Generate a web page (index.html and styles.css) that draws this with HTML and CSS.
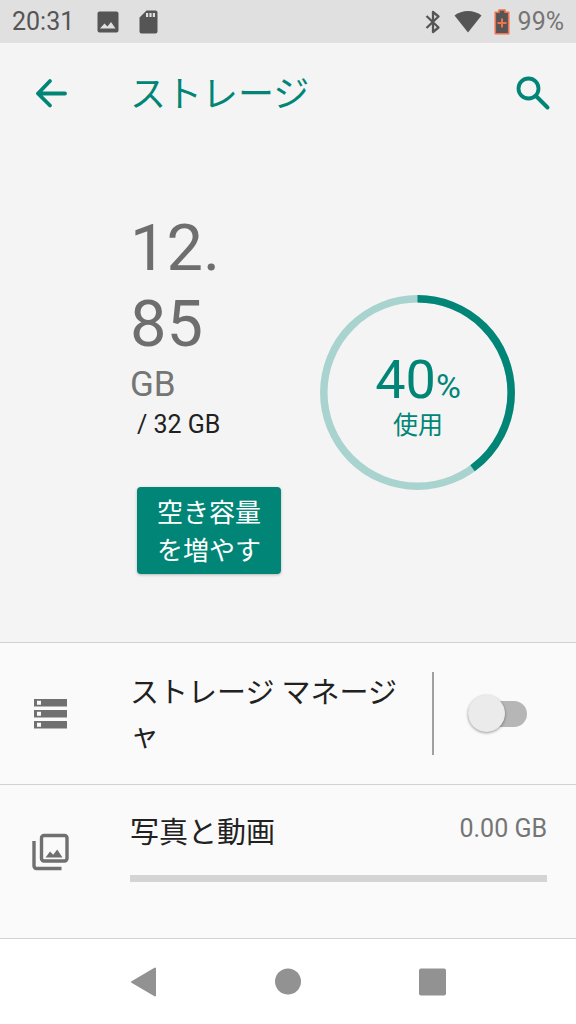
FILE: index.html
```html
<!DOCTYPE html>
<html lang="ja">
<head>
<meta charset="utf-8">
<meta name="viewport" content="width=device-width, initial-scale=1">
<title>ストレージ</title>
<link rel="stylesheet" href="styles.css">
</head>
<body>
<div class="status-bar">
  <span class="clock">20:31</span>
  <svg class="status-photo" width="22" height="22" viewBox="0 0 22 22" aria-hidden="true"><path fill="currentColor" fill-rule="evenodd" d="M2.500 0.500h17a2 2 0 0 1 2 2v17a2 2 0 0 1-2 2h-17a2 2 0 0 1-2-2v-17a2 2 0 0 1 2-2zM3 17.500h15.500l-4.500-6.500-3.500 4.500-3-3z"/></svg>
  <svg class="status-card" width="20" height="24" viewBox="0 0 20 24" aria-hidden="true"><path fill="currentColor" fill-rule="evenodd" d="M7.500 0.500h9a2 2 0 0 1 2 2v19a2 2 0 0 1-2 2h-14a2 2 0 0 1-2-2v-14zM7 3v4h2.200v-4zM10.400 3v4h2.200v-4zM13.800 3v4h2.200v-4z"/></svg>
  <div class="status-right">
    <svg width="18" height="24" viewBox="0 0 18 24" aria-hidden="true"><path fill="none" stroke="currentColor" stroke-width="2.300" stroke-linejoin="round" d="M2.500 6L14.500 17.500L9 22V2L14.500 6.500L2.500 18"/></svg>
    <svg class="wifi" width="28" height="24" viewBox="0 0 28 24" aria-hidden="true"><path fill="currentColor" d="M0.500 5.500C8 -0.500 20 -0.500 27.500 5.500L14 22.500z"/></svg>
    <svg class="battery" width="16" height="26" viewBox="0 0 16 26" aria-hidden="true"><path fill="#555" stroke="#f0714c" stroke-width="1.600" stroke-linejoin="round" d="M5 3.200V1h6v2.200h3.700v21.500H1.300V3.200z"/><path stroke="#f0714c" stroke-width="2" d="M8 9.500v9M3.500 14h9"/></svg>
    <span class="level">99%</span>
  </div>
</div>

<header class="app-bar">
  <button class="icon-button" type="button" aria-label="戻る"><svg width="34" height="32" viewBox="0 0 34 32"><path fill="none" stroke="currentColor" stroke-width="3.800" stroke-linecap="round" stroke-linejoin="round" d="M16 4L4 16.500l12 12M4 16.500h27"/></svg></button>
  <h1 class="title">ストレージ</h1>
  <button class="icon-button" type="button" aria-label="検索"><svg width="36" height="36" viewBox="0 0 36 36"><circle cx="13.500" cy="13.500" r="10" fill="none" stroke="currentColor" stroke-width="3.800"/><path stroke="currentColor" stroke-width="4" stroke-linecap="round" d="M21 21l11.500 11.500"/></svg></button>
</header>

<main class="content">
  <section class="summary">
    <div class="usage">
      <div class="used">12.<wbr>85</div>
      <div class="unit">GB</div>
      <div class="total">/ 32 GB</div>
      <button class="free-button" type="button">空き容量を増やす</button>
    </div>
    <div class="donut">
      <svg class="ring" viewBox="0 0 196 196" aria-hidden="true"><circle cx="97.500" cy="97.500" r="93.700" fill="none" stroke="#a9d3ce" stroke-width="7.500"/><circle cx="97.500" cy="97.500" r="93.700" fill="none" stroke="#008577" stroke-width="7.500" pathLength="100" stroke-dasharray="40 60" transform="rotate(-90 97.500 97.500)"/></svg>
      <div class="donut-label">
        <div class="percent">40<span class="sign">%</span></div>
        <div class="caption">使用</div>
      </div>
    </div>
  </section>

  <section class="row manager">
    <svg class="row-icon" width="38" height="38" viewBox="0 0 38 38" aria-hidden="true"><path fill="currentColor" fill-rule="evenodd" d="M3 4h33v7.500H3zM6 5.800v4h4v-4zM3 15h33v7.500H3zM6 16.800v4h4v-4zM3 26h33v7.500H3zM6 27.800v4h4v-4z"/></svg>
    <label class="row-title" for="manager-switch">ストレージ マネージャ</label>
    <div class="switch-box"><input class="switch" id="manager-switch" type="checkbox" role="switch"></div>
  </section>

  <section class="row media">
    <svg class="row-icon" width="38" height="38" viewBox="0 0 38 38" aria-hidden="true"><rect x="10.500" y="2.500" width="25.500" height="25.500" rx="2.500" fill="none" stroke="currentColor" stroke-width="3.400"/><path fill="none" stroke="currentColor" stroke-width="3.400" d="M3 8v25a2.500 2.500 0 0 0 2.500 2.500H30.500"/><path fill="currentColor" d="M14.500 24.500l4.500-6 3.200 3.200 4-5.200 5.300 8z"/></svg>
    <div class="media-body">
      <div class="media-line"><span class="row-title" id="media-name">写真と動画</span><span class="size">0.00 GB</span></div>
      <progress class="bar" value="0" max="100" aria-labelledby="media-name"></progress>
    </div>
  </section>
</main>

<nav class="nav-bar">
  <button class="nav-button" type="button" aria-label="戻る"><svg width="30" height="30" viewBox="0 0 30 30"><path fill="currentColor" stroke="currentColor" stroke-width="2" stroke-linejoin="round" d="M3 15L26 1.500v27z"/></svg></button>
  <button class="nav-button" type="button" aria-label="ホーム"><svg width="30" height="30" viewBox="0 0 30 30"><circle cx="15" cy="14.500" r="13" fill="currentColor"/></svg></button>
  <button class="nav-button" type="button" aria-label="アプリ履歴"><svg width="30" height="30" viewBox="0 0 30 30"><rect x="2" y="1.500" width="27" height="27" rx="2" fill="currentColor"/></svg></button>
</nav>
</body>
</html>
```
FILE: styles.css
```css
* {
  box-sizing: border-box;
}

body {
  margin: 0;
  min-height: 100vh;
  display: flex;
  flex-direction: column;
  background: #f4f4f4;
  color: #212121;
  font-family: Roboto, "Noto Sans CJK JP", sans-serif;
}

button {
  border: 0;
  padding: 0;
  background: none;
  color: inherit;
  font: inherit;
  cursor: pointer;
}

svg {
  display: block;
}

.status-bar {
  display: flex;
  align-items: center;
  height: 43px;
  padding: 0 12px;
  background: #e0e0e0;
  color: #555;
  font-size: 25px;
}

.status-photo {
  margin-left: 23px;
}

.status-card {
  margin-left: 20px;
}

.status-right {
  display: flex;
  align-items: center;
  margin-left: auto;
}

.wifi {
  margin-left: 12px;
}

.battery {
  margin: 0 8px 0 12px;
}

.level {
  color: #757575;
}

.app-bar {
  display: flex;
  align-items: center;
  height: 100px;
  padding: 0 25px 0 34px;
  color: #008577;
}

.title {
  flex: 1;
  margin: 0 0 0 62px;
  padding-top: 4px;
  font-size: 36px;
  font-weight: 400;
  line-height: 52px;
}

.content {
  display: flex;
  flex: 1;
  flex-direction: column;
}

.summary {
  display: flex;
  flex: 1;
  align-items: flex-start;
  justify-content: space-between;
  padding: 67px 60px 68px 130px;
}

.used {
  width: 120px;
  color: #6e6e6e;
  font-size: 65px;
  line-height: 76px;
}

.unit {
  color: #757575;
  font-size: 35px;
  line-height: 46px;
}

.total {
  margin: 2px 0 0 7px;
  font-size: 25px;
  line-height: 30px;
}

.free-button {
  width: 144px;
  margin: 47px 0 0 7px;
  padding: 7px 20px 4px;
  border-radius: 4px;
  background: #008577;
  box-shadow: 0 1px 3px rgba(0, 0, 0, 0.25);
  color: #fff;
  font-size: 26px;
  line-height: 38px;
  text-align: left;
}

.donut {
  display: grid;
  width: 196px;
  margin-top: 85px;
  color: #008577;
}

.ring,
.donut-label {
  grid-area: 1 / 1;
}

.donut-label {
  align-self: center;
  padding-top: 10px;
  text-align: center;
}

.percent {
  font-size: 54px;
  line-height: 50px;
}

.sign {
  font-size: 34px;
}

.caption {
  font-size: 25px;
  line-height: 30px;
}

.row {
  display: flex;
  border-top: 1px solid #d2d2d2;
  background: #fafafa;
}

.row-icon {
  flex: none;
  margin: 0 61px 0 31px;
  color: #707070;
}

.row-title {
  font-size: 29px;
}

.manager {
  align-items: center;
  padding: 26px 0;
}

.manager .row-title {
  flex: 1;
  padding-top: 3px;
  line-break: anywhere;
  line-height: 43px;
}

.switch-box {
  display: flex;
  flex: none;
  align-items: center;
  justify-content: center;
  width: 144px;
  height: 83px;
  margin-left: 28px;
  padding-right: 15px;
  border-left: 2px solid #a0a0a0;
}

.switch {
  display: flex;
  align-items: center;
  width: 59px;
  height: 26px;
  margin: 0;
  border-radius: 13px;
  background: #b6b6b6;
  appearance: none;
}

.switch::before {
  content: "";
  width: 37px;
  height: 37px;
  border-radius: 50%;
  background: #ebebeb;
  box-shadow: 0 1px 3px rgba(0, 0, 0, 0.4);
}

.switch:checked {
  justify-content: flex-end;
  background: #80c2bb;
}

.media {
  align-items: flex-start;
  padding: 23px 29px 56px 0;
}

.media .row-icon {
  margin-top: 25px;
}

.media .row-title {
  line-height: 50px;
}

.media-body {
  flex: 1;
}

.media-line {
  display: flex;
  align-items: flex-start;
  justify-content: space-between;
}

.size {
  color: #757575;
  font-size: 25px;
  line-height: 42px;
}

.bar {
  display: block;
  width: 100%;
  height: 7px;
  margin-top: 17px;
  border: 0;
  background: #d4d4d4;
  appearance: none;
}

.bar::-webkit-progress-bar {
  background: #d4d4d4;
}

.bar::-webkit-progress-value {
  background: #008577;
}

.nav-bar {
  display: flex;
  height: 86px;
  padding: 0 12.5%;
  border-top: 1px solid #d2d2d2;
  background: #fff;
  color: #929292;
}

.nav-button {
  display: flex;
  flex: 1;
  align-items: center;
  justify-content: center;
}
```
